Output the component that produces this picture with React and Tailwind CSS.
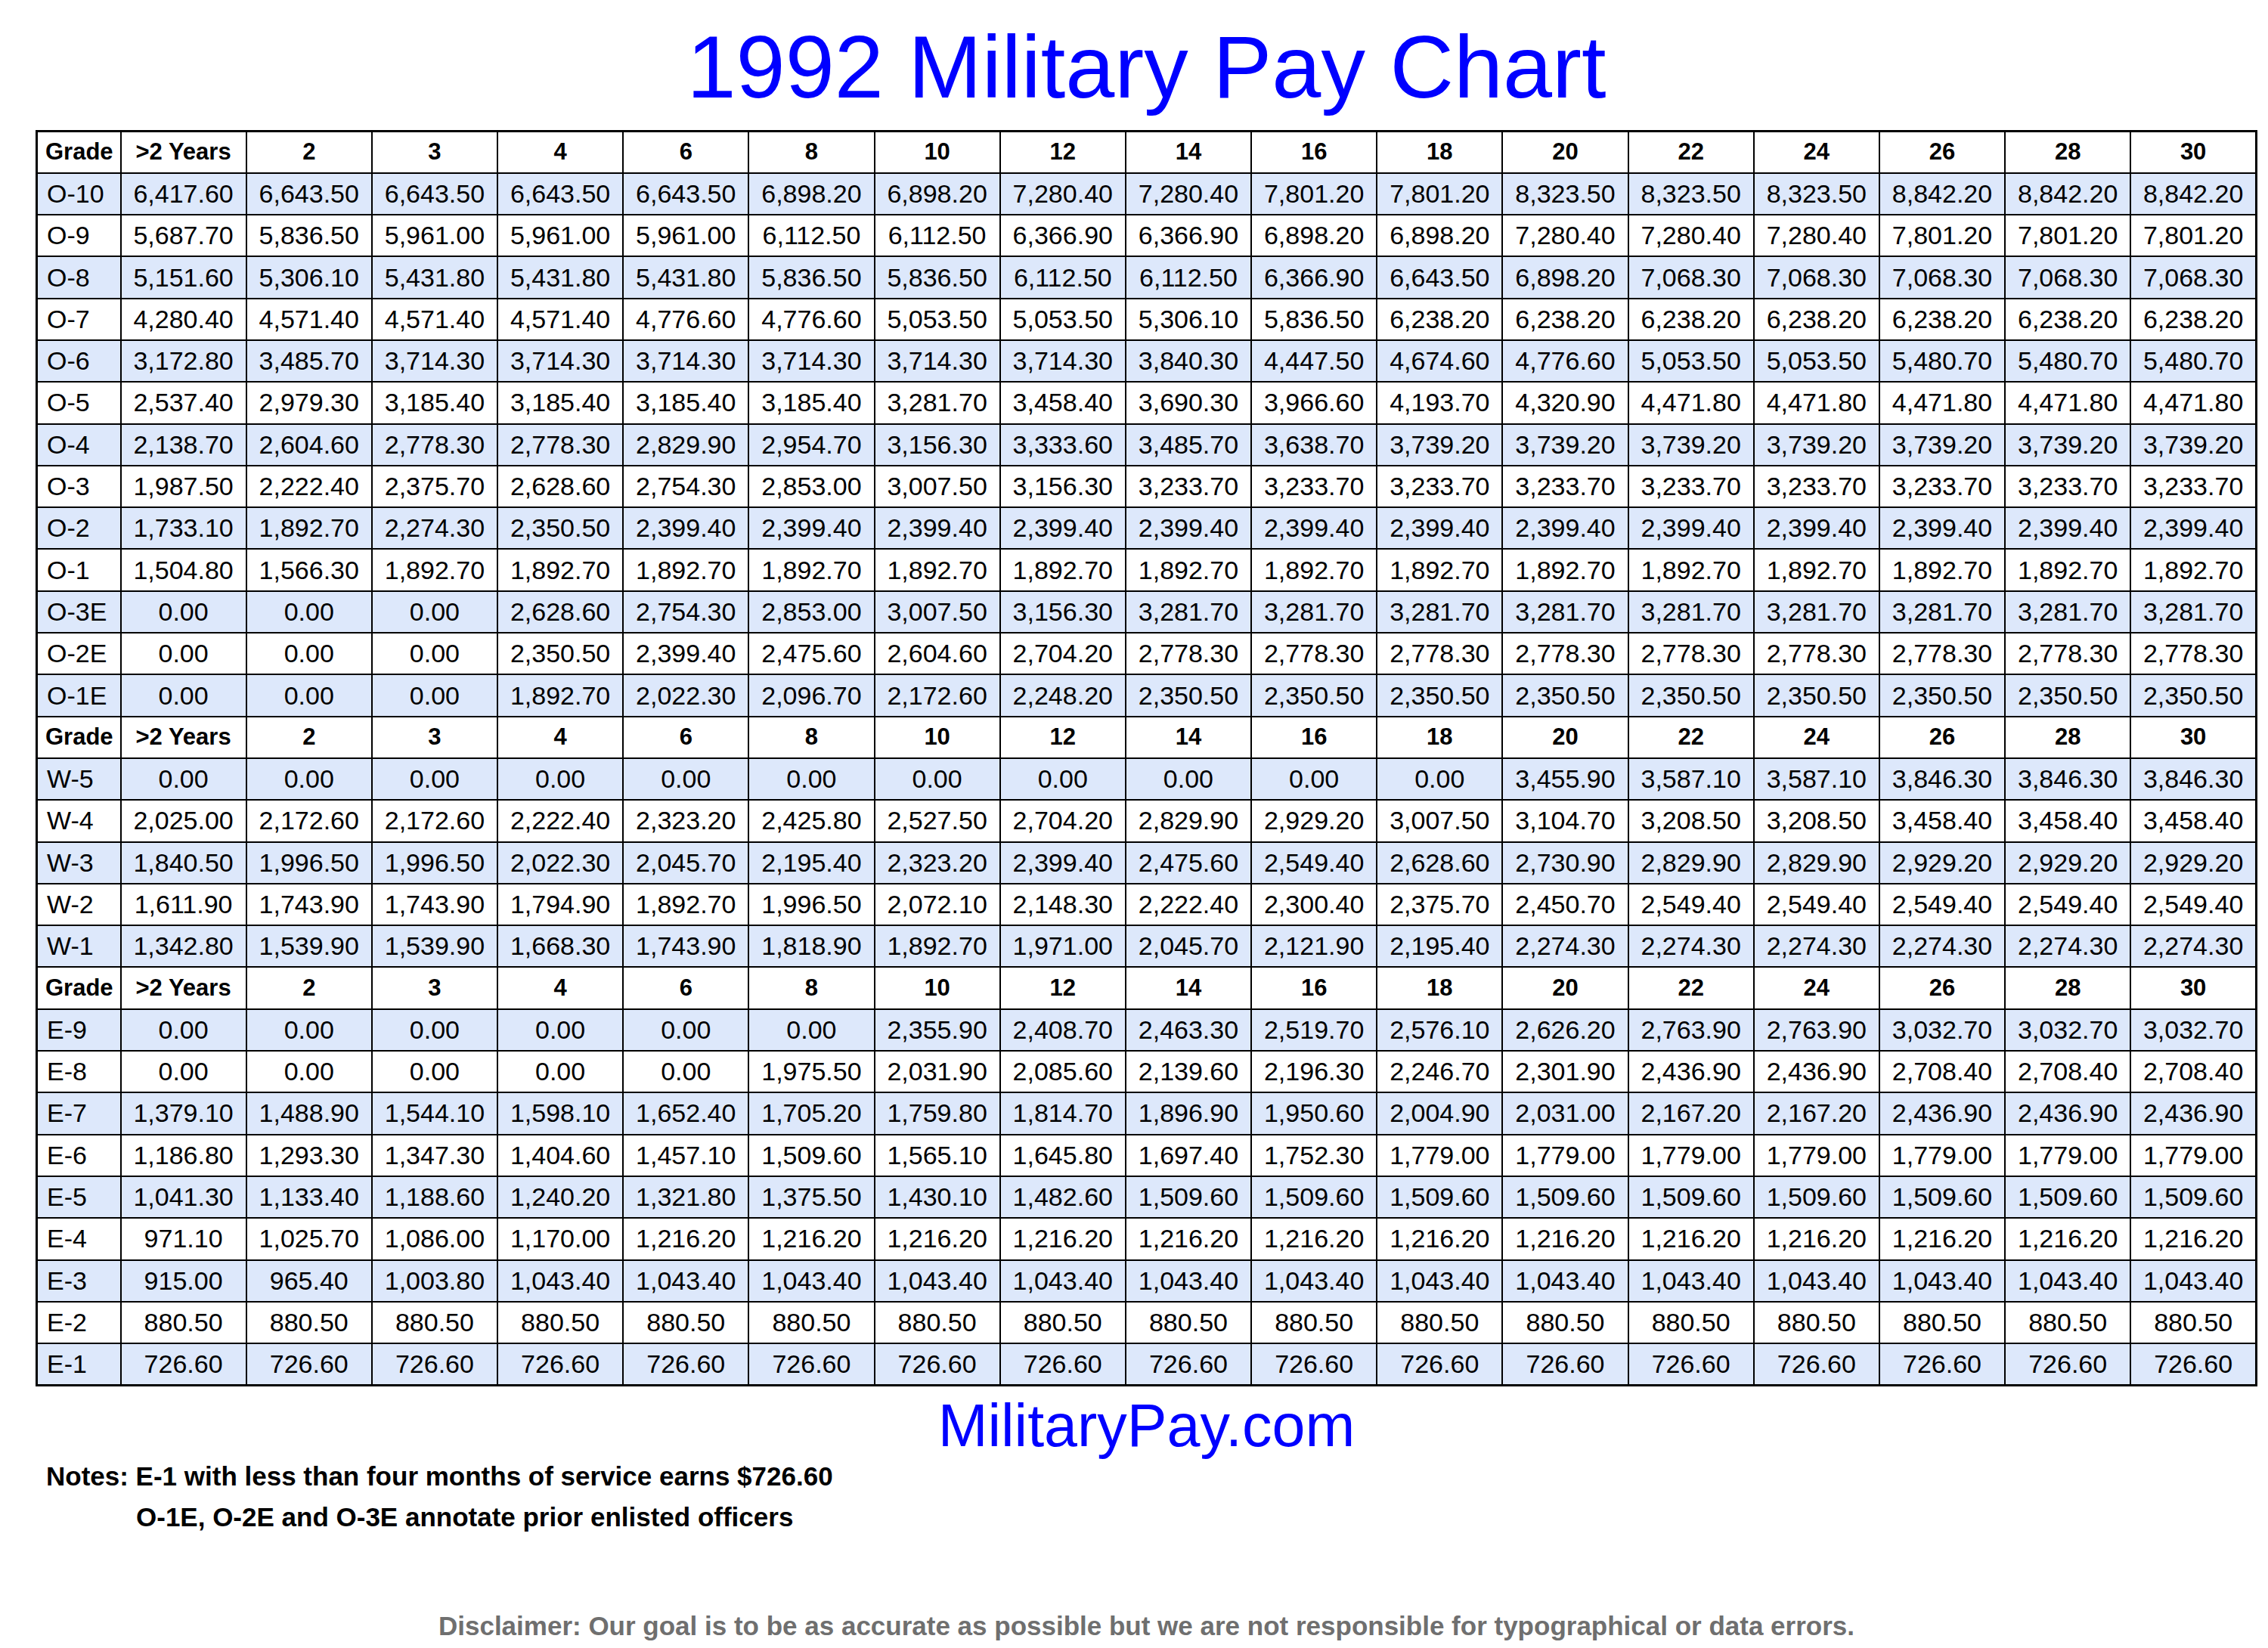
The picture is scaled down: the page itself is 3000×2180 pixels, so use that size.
import React from 'react';

const cols = ['>2 Years', '2', '3', '4', '6', '8', '10', '12', '14', '16', '18', '20', '22', '24', '26', '28', '30'];

const rep = (v, n) => Array(n).fill(v);

// pay by grade, one value per column of years of service
const sections = [
  [
    ['O-10', ['6,417.60', '6,643.50', '6,643.50', '6,643.50', '6,643.50', '6,898.20', '6,898.20', '7,280.40', '7,280.40', '7,801.20', '7,801.20', '8,323.50', '8,323.50', '8,323.50', '8,842.20', '8,842.20', '8,842.20']],
    ['O-9', ['5,687.70', '5,836.50', '5,961.00', '5,961.00', '5,961.00', '6,112.50', '6,112.50', '6,366.90', '6,366.90', '6,898.20', '6,898.20', '7,280.40', '7,280.40', '7,280.40', '7,801.20', '7,801.20', '7,801.20']],
    ['O-8', ['5,151.60', '5,306.10', '5,431.80', '5,431.80', '5,431.80', '5,836.50', '5,836.50', '6,112.50', '6,112.50', '6,366.90', '6,643.50', '6,898.20', '7,068.30', '7,068.30', '7,068.30', '7,068.30', '7,068.30']],
    ['O-7', ['4,280.40', '4,571.40', '4,571.40', '4,571.40', '4,776.60', '4,776.60', '5,053.50', '5,053.50', '5,306.10', '5,836.50', ...rep('6,238.20', 7)]],
    ['O-6', ['3,172.80', '3,485.70', ...rep('3,714.30', 6), '3,840.30', '4,447.50', '4,674.60', '4,776.60', '5,053.50', '5,053.50', '5,480.70', '5,480.70', '5,480.70']],
    ['O-5', ['2,537.40', '2,979.30', '3,185.40', '3,185.40', '3,185.40', '3,185.40', '3,281.70', '3,458.40', '3,690.30', '3,966.60', '4,193.70', '4,320.90', ...rep('4,471.80', 5)]],
    ['O-4', ['2,138.70', '2,604.60', '2,778.30', '2,778.30', '2,829.90', '2,954.70', '3,156.30', '3,333.60', '3,485.70', '3,638.70', ...rep('3,739.20', 7)]],
    ['O-3', ['1,987.50', '2,222.40', '2,375.70', '2,628.60', '2,754.30', '2,853.00', '3,007.50', '3,156.30', ...rep('3,233.70', 9)]],
    ['O-2', ['1,733.10', '1,892.70', '2,274.30', '2,350.50', ...rep('2,399.40', 13)]],
    ['O-1', ['1,504.80', '1,566.30', ...rep('1,892.70', 15)]],
    ['O-3E', [...rep('0.00', 3), '2,628.60', '2,754.30', '2,853.00', '3,007.50', '3,156.30', ...rep('3,281.70', 9)]],
    ['O-2E', [...rep('0.00', 3), '2,350.50', '2,399.40', '2,475.60', '2,604.60', '2,704.20', ...rep('2,778.30', 9)]],
    ['O-1E', [...rep('0.00', 3), '1,892.70', '2,022.30', '2,096.70', '2,172.60', '2,248.20', ...rep('2,350.50', 9)]],
  ],
  [
    ['W-5', [...rep('0.00', 11), '3,455.90', '3,587.10', '3,587.10', '3,846.30', '3,846.30', '3,846.30']],
    ['W-4', ['2,025.00', '2,172.60', '2,172.60', '2,222.40', '2,323.20', '2,425.80', '2,527.50', '2,704.20', '2,829.90', '2,929.20', '3,007.50', '3,104.70', '3,208.50', '3,208.50', '3,458.40', '3,458.40', '3,458.40']],
    ['W-3', ['1,840.50', '1,996.50', '1,996.50', '2,022.30', '2,045.70', '2,195.40', '2,323.20', '2,399.40', '2,475.60', '2,549.40', '2,628.60', '2,730.90', '2,829.90', '2,829.90', '2,929.20', '2,929.20', '2,929.20']],
    ['W-2', ['1,611.90', '1,743.90', '1,743.90', '1,794.90', '1,892.70', '1,996.50', '2,072.10', '2,148.30', '2,222.40', '2,300.40', '2,375.70', '2,450.70', ...rep('2,549.40', 5)]],
    ['W-1', ['1,342.80', '1,539.90', '1,539.90', '1,668.30', '1,743.90', '1,818.90', '1,892.70', '1,971.00', '2,045.70', '2,121.90', '2,195.40', ...rep('2,274.30', 6)]],
  ],
  [
    ['E-9', [...rep('0.00', 6), '2,355.90', '2,408.70', '2,463.30', '2,519.70', '2,576.10', '2,626.20', '2,763.90', '2,763.90', '3,032.70', '3,032.70', '3,032.70']],
    ['E-8', [...rep('0.00', 5), '1,975.50', '2,031.90', '2,085.60', '2,139.60', '2,196.30', '2,246.70', '2,301.90', '2,436.90', '2,436.90', '2,708.40', '2,708.40', '2,708.40']],
    ['E-7', ['1,379.10', '1,488.90', '1,544.10', '1,598.10', '1,652.40', '1,705.20', '1,759.80', '1,814.70', '1,896.90', '1,950.60', '2,004.90', '2,031.00', '2,167.20', '2,167.20', '2,436.90', '2,436.90', '2,436.90']],
    ['E-6', ['1,186.80', '1,293.30', '1,347.30', '1,404.60', '1,457.10', '1,509.60', '1,565.10', '1,645.80', '1,697.40', '1,752.30', ...rep('1,779.00', 7)]],
    ['E-5', ['1,041.30', '1,133.40', '1,188.60', '1,240.20', '1,321.80', '1,375.50', '1,430.10', '1,482.60', ...rep('1,509.60', 9)]],
    ['E-4', ['971.10', '1,025.70', '1,086.00', '1,170.00', ...rep('1,216.20', 13)]],
    ['E-3', ['915.00', '965.40', '1,003.80', ...rep('1,043.40', 14)]],
    ['E-2', rep('880.50', 17)],
    ['E-1', rep('726.60', 17)],
  ],
];

const HeaderRow = () => (
  <tr className="h-[55.3px] bg-white">
    <th className="border-2 border-black pl-[10px] text-left text-[31px] font-bold">Grade</th>
    {cols.map(c => (
      <th key={c} className="border-2 border-black text-center text-[31px] font-bold">{c}</th>
    ))}
  </tr>
);

export default function App() {
  return (
    <div className="w-[3000px] h-[2180px] bg-white text-black overflow-hidden" style={{ fontFamily: '"Liberation Sans", Arial, sans-serif' }}>
      <div className="ml-[47px] w-[2939px]">
        <h1 className="pt-[30px] text-center text-[117px] leading-none text-[#0000ff]">1992 Military Pay Chart</h1>

        <table className="mt-[25px] w-full table-fixed border-collapse border-[3px] border-black">
          <colgroup>
            <col className="w-[111px]" />
            {cols.map(c => <col key={c} />)}
          </colgroup>
          <tbody>
            {sections.map((rows, si) => (
              <React.Fragment key={si}>
                <HeaderRow />
                {rows.map(([grade, pay], i) => (
                  <tr key={grade} className={i % 2 === 0 ? 'h-[55.3px] bg-[#dde8fb]' : 'h-[55.3px] bg-white'}>
                    <td className="border-2 border-black pl-[12px] text-left text-[34px] whitespace-nowrap">{grade}</td>
                    {pay.map((v, j) => (
                      <td key={j} className="border-2 border-black text-center text-[34px] whitespace-nowrap">{v}</td>
                    ))}
                  </tr>
                ))}
              </React.Fragment>
            ))}
          </tbody>
        </table>

        <div className="mt-[12px] text-center text-[79px] leading-none text-[#0000ff]">MilitaryPay.com</div>

        <p className="mt-[10px] pl-[14px] text-[35px] font-bold leading-none">Notes: E-1 with less than four months of service earns $726.60</p>
        <p className="mt-[19px] pl-[133px] text-[35px] font-bold leading-none">O-1E, O-2E and O-3E annotate prior enlisted officers</p>

        <p className="mt-[109px] text-center text-[35px] font-bold leading-none text-[#6f6f6f]">
          Disclaimer: Our goal is to be as accurate as possible but we are not responsible for typographical or data errors.
        </p>
      </div>
    </div>
  );
}
